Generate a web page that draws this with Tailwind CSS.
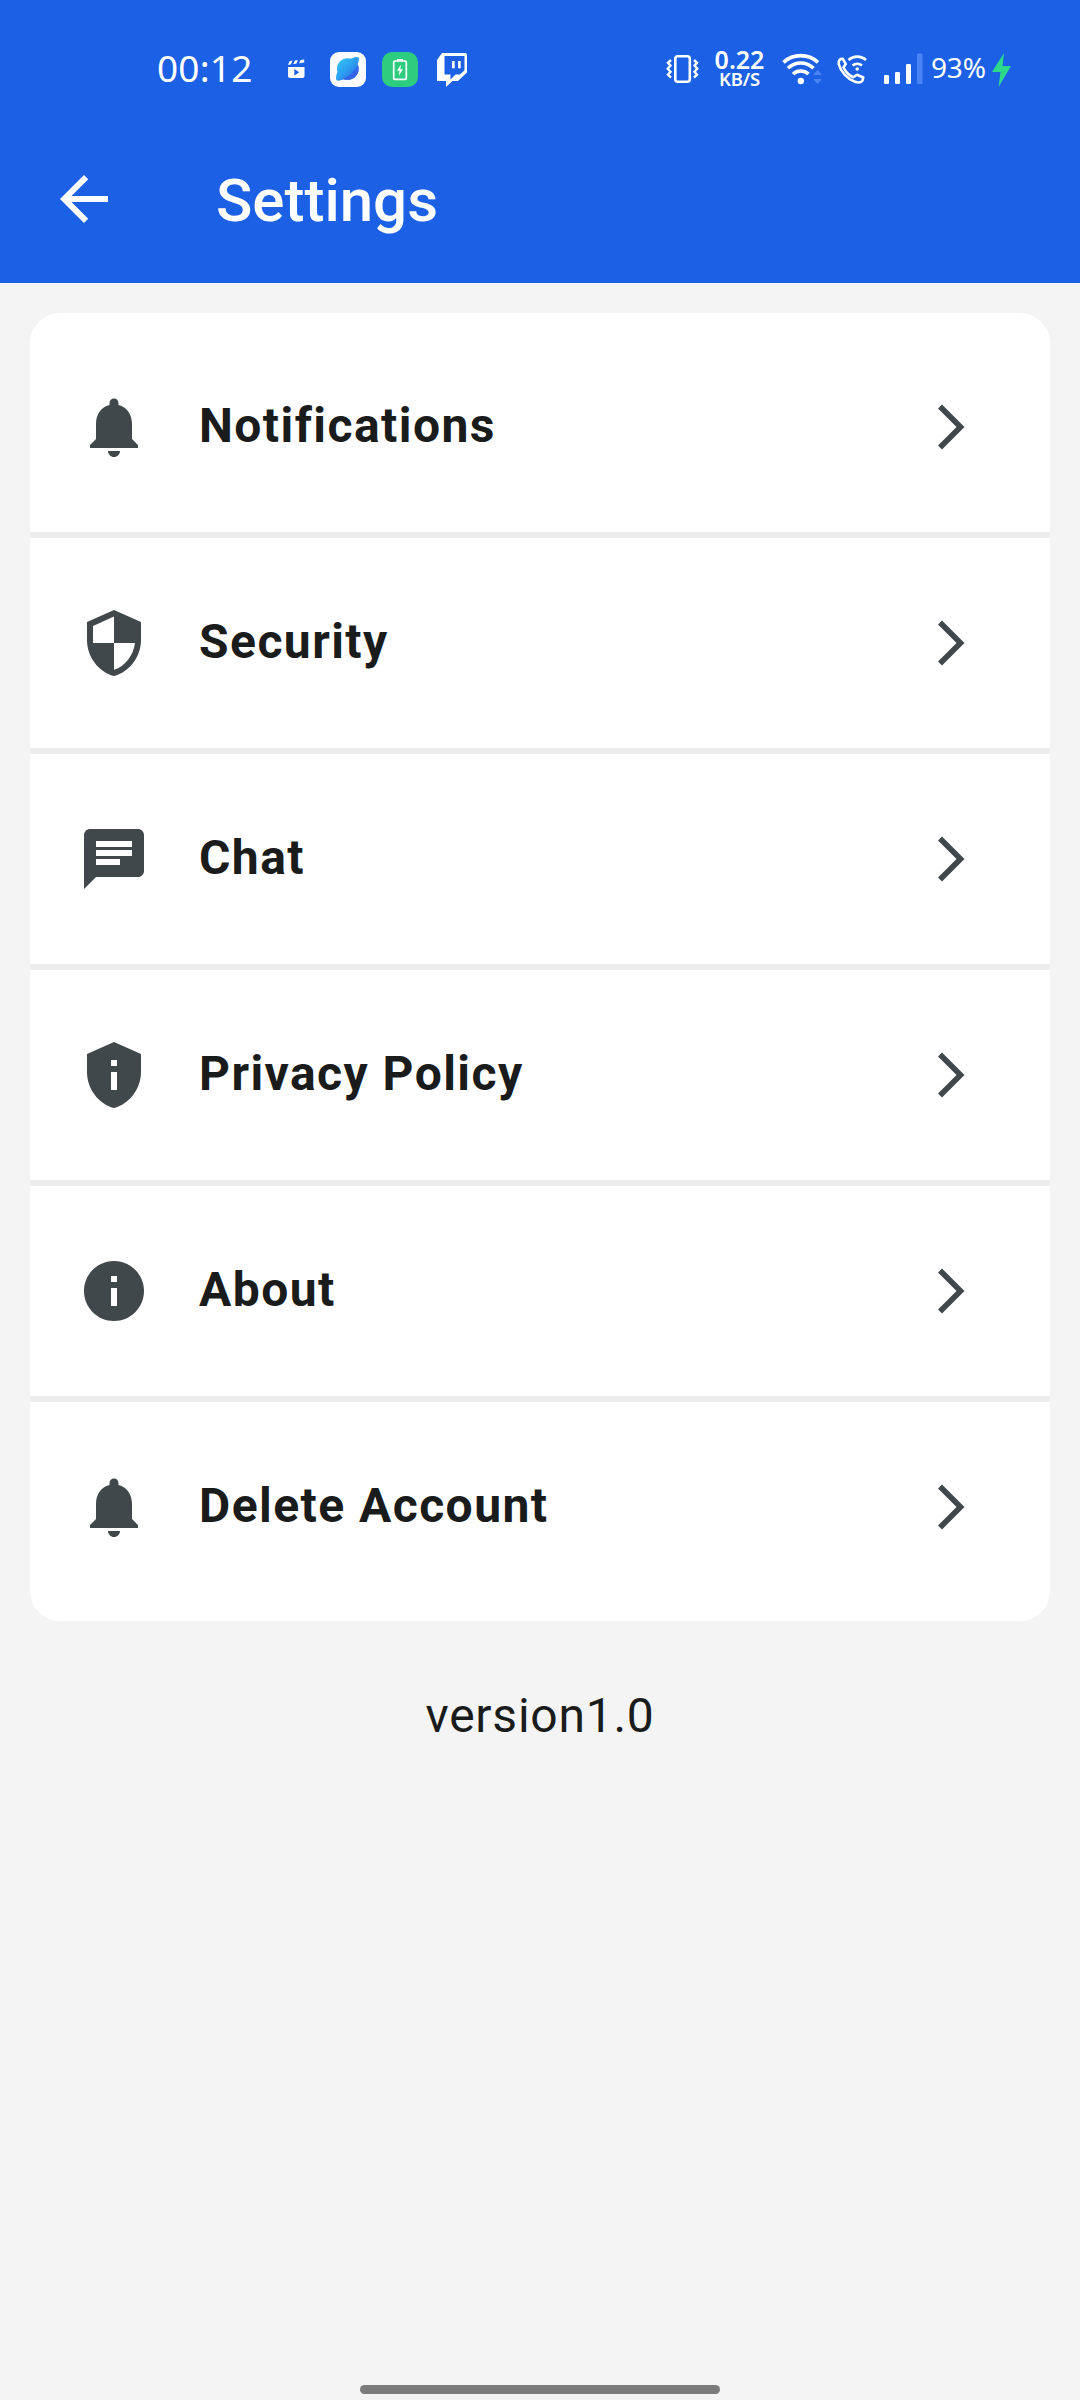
<!DOCTYPE html>
<html lang="en">
<head>
<meta charset="utf-8">
<title>Settings</title>
<script src="https://cdn.jsdelivr.net/npm/@tailwindcss/browser@4"></script>
</head>
<body class="w-[1080px] h-[2400px] overflow-hidden bg-[#f4f4f4] text-[#1a1c1c] font-[Roboto,sans-serif] flex flex-col">
<svg class="hidden">
  <symbol id="bell" viewBox="0 0 24 24"><path d="M12 22c1.1 0 2-.9 2-2h-4c0 1.1.89 2 2 2zm6-6v-5c0-3.07-1.64-5.64-4.5-6.32V4c0-.83-.67-1.5-1.5-1.5s-1.5.67-1.5 1.5v.68C7.63 5.36 6 7.92 6 11v5l-2 2v1h16v-1l-2-2z"/></symbol>
  <symbol id="shield" viewBox="0 0 24 24"><path d="M12 1L3 5v6c0 5.55 3.84 10.74 9 12 5.16-1.26 9-6.45 9-12V5l-9-4zm0 10.99h7c-.53 4.12-3.28 7.79-7 8.94V12H5V6.3l7-3.11v8.8z"/></symbol>
  <symbol id="chat" viewBox="0 0 24 24"><path d="M20 2H4c-1.1 0-1.99.9-1.99 2L2 22l4-4h14c1.1 0 2-.9 2-2V4c0-1.1-.9-2-2-2zM6 9h12v2H6V9zm8 5H6v-2h8v2zm4-6H6V6h12v2z"/></symbol>
  <symbol id="privacy" viewBox="0 0 24 24"><path d="M12 1L3 5v6c0 5.55 3.84 10.74 9 12 5.16-1.26 9-6.45 9-12V5l-9-4zm-1 6h2v2h-2V7zm0 4h2v6h-2v-6z"/></symbol>
  <symbol id="info" viewBox="0 0 24 24"><path d="M12 2C6.48 2 2 6.48 2 12s4.48 10 10 10 10-4.48 10-10S17.52 2 12 2zm1 15h-2v-6h2v6zm0-8h-2V7h2v2z"/></symbol>
  <symbol id="next" viewBox="0 0 24 24"><path d="M6.23 20.23L8 22l10-10L8 2 6.23 3.77 14.46 12z"/></symbol>
</svg>

<header class="h-[283px] shrink-0 bg-[#1c60e6] text-white pt-[50px]">
  <div class="h-10 flex items-center justify-between pl-[156px] pr-[66px] whitespace-nowrap">
    <div class="flex items-center">
      <div class="w-[130px] h-10 text-[37px] leading-[35px] pl-px font-['Noto_Sans',sans-serif] tracking-[0.2px]">00:12</div>
      <svg class="w-5 h-10" viewBox="286 50 20 40" fill="#fff"><path d="M288 67h16.500v9a2 2 0 0 1-2 2h-12.500a2 2 0 0 1-2-2z"/><path d="M288 65l1.500-3.800 3-.7-1.500 3.800zM293.300 64l1.600-3.400 3-.5-1.600 3.600zM299 63.300l1.600-3.200 3.600-.5v3z"/><path d="M294.300 69v6.400l5-3.200z" fill="#1c60e6"/></svg>
      <svg class="w-9 h-10 ml-6" viewBox="330 50 36 40"><defs><linearGradient id="g" x1="0" y1="0" x2="1" y2="1"><stop offset="0" stop-color="#35c8f5"/><stop offset=".5" stop-color="#2b9df0"/><stop offset="1" stop-color="#3157e0"/></linearGradient></defs><rect x="330" y="52" width="36" height="35" rx="9" fill="#fafaff"/><circle cx="347.800" cy="69" r="10.800" fill="url(#g)"/><path d="M337.500 72c-1.500 3.500-2 7-.7 8.300 1.200 1 4 .3 7-1zM351 58.500c3.500-1.500 6.500-2 7.500-1 1 1.200.2 4.500-1.300 7.500z" fill="url(#g)"/><path d="M358 65c-3 6-9 12-15.500 14 4.500 1.800 9.500.6 12.800-2.600 3.300-3.400 4.200-7.400 2.700-11.400z" fill="#3465e6"/></svg>
      <svg class="w-9 h-10 ml-4" viewBox="382 50 36 40"><rect x="382" y="52" width="36" height="35" rx="10" fill="#2dcc7f"/><rect x="393.700" y="61" width="12.600" height="18.300" rx="1" fill="none" stroke="#fff" stroke-width="1.700"/><path d="M397 59h6v2h-6z" fill="#fff"/><path d="M401 64.500l-4 6.200h2.500l-.6 5 4-6.500h-2.600z" fill="#fff"/></svg>
      <svg class="w-8 h-10 ml-[18px]" viewBox="436 50 32 40" fill="#fff"><path fill-rule="evenodd" d="M442 53h23q2 0 2 2v17.500l-9 8.500h-5.500l-6.500 6v-6h-9V60zM444.500 56v18.500h6v5l5-5h4.500l4.500-4.300V56z"/><path d="M452 61h2.700v7.300H452zM458 61h2.700v7.300H458z"/></svg>
    </div>
    <div class="flex items-center">
      <svg class="w-[34px] h-10" viewBox="665 50 34 40" fill="none" stroke="#fff" stroke-width="2.600"><rect x="675.300" y="56.300" width="14.500" height="25.500" rx="2.500"/><path stroke-width="2.400" d="M671 60l-3 2.800 2.500 2.800-2.800 3.200 2.800 3-2.500 2.800 3 3M694 60l3 2.800-2.500 2.800 2.800 3.200-2.800 3 2.500 2.800-3 3"/></svg>
      <div class="ml-[13px] w-[55px] h-10 flex flex-col items-center font-['Noto_Sans',sans-serif] font-semibold">
        <div class="text-[25px] leading-[19px]">0.22</div>
        <div class="text-[18.5px] leading-[20px] tracking-[-0.2px]">KB/S</div>
      </div>
      <svg class="w-[42px] h-10 ml-[14px]" viewBox="781 50 42 40" fill="none" stroke="#fff" stroke-width="3.600"><path d="M783.500 62.300a25.500 25.500 0 0 1 34.500 0M788 68.300a18 18 0 0 1 25.500 0M793 74a11.500 11.500 0 0 1 15.500 0"/><circle cx="800.800" cy="81" r="3.200" fill="#fff" stroke="none"/><path d="M814 74.500l3.500-4 3.500 4zM814 79.500l3.500 4 3.500-4z" fill="#4a83f2" stroke="#4a83f2" stroke-width="1"/></svg>
      <svg class="w-8 h-10 ml-[13px]" viewBox="836 50 32 40" fill="none" stroke="#fff" stroke-width="2.600"><path stroke-linejoin="round" d="M838.800 61.500c.5-1.700 2.200-3 4-2.700l3 5.300-2.300 3.200c2 4.500 5.300 8 9.800 10l3.700-2.600 6.300 2.800-1 3.500c-1.600 1.800-4.500 1.800-7.300.8-7.700-2.800-14.500-10.500-16.200-17.500z"/><path d="M848.500 60a13 13 0 0 1 17.500 0M852.500 65.500a7.500 7.500 0 0 1 9.500 0"/><circle cx="857.200" cy="69" r="1.800" fill="#fff" stroke="none"/></svg>
      <svg class="w-10 h-10 ml-[15px]" viewBox="883 50 40 40" fill="#fff"><rect x="884" y="75" width="5" height="9" rx="1.300"/><rect x="895" y="72" width="5" height="12" rx="1.300"/><rect x="906" y="64" width="5" height="20" rx="1.300"/><rect x="917" y="53.500" width="5.500" height="30.500" rx="1.300" fill="#4a83f2"/></svg>
      <div class="ml-2 w-[59px] text-[28px] leading-[35px] h-10 font-['Noto_Sans',sans-serif] tracking-[-0.2px]">93%</div>
      <svg class="w-6 h-10" viewBox="990 50 24 40"><path d="M1004 53l-12 19h8.500l-2 15L1011 66h-8.500z" fill="#2fd98a"/></svg>
    </div>
  </div>
  <div class="h-[168px] mt-[25px] flex items-center pl-12">
    <svg class="size-[72px]" viewBox="0 0 24 24" fill="#fff"><path d="M20 11H7.830l5.590-5.590L12 4l-8 8 8 8 1.410-1.410L7.830 13H20v-2z"/></svg>
    <h1 class="ml-24 pt-[3px] text-[60px] leading-[72px] font-medium">Settings</h1>
  </div>
</header>

<main class="px-[30px] pt-[30px]">
  <ul class="bg-white rounded-[30px] py-[9px] divide-y-[6px] divide-[#ededed] text-[48px] font-bold tracking-[1.45px]">
    <li class="h-[216px] flex items-center pl-12 pr-[72px]"><svg class="size-[72px] fill-[#40484b]"><use href="#bell"/></svg><span class="ml-[49px] pb-[2px] flex-1">Notifications</span><svg class="size-[54px] fill-[#40484b]"><use href="#next"/></svg></li>
    <li class="h-[216px] flex items-center pl-12 pr-[72px]"><svg class="size-[72px] fill-[#40484b]"><use href="#shield"/></svg><span class="ml-[49px] pb-[2px] flex-1">Security</span><svg class="size-[54px] fill-[#40484b]"><use href="#next"/></svg></li>
    <li class="h-[216px] flex items-center pl-12 pr-[72px]"><svg class="size-[72px] fill-[#40484b]"><use href="#chat"/></svg><span class="ml-[49px] pb-[2px] flex-1">Chat</span><svg class="size-[54px] fill-[#40484b]"><use href="#next"/></svg></li>
    <li class="h-[216px] flex items-center pl-12 pr-[72px]"><svg class="size-[72px] fill-[#40484b]"><use href="#privacy"/></svg><span class="ml-[49px] pb-[2px] flex-1">Privacy Policy</span><svg class="size-[54px] fill-[#40484b]"><use href="#next"/></svg></li>
    <li class="h-[216px] flex items-center pl-12 pr-[72px]"><svg class="size-[72px] fill-[#40484b]"><use href="#info"/></svg><span class="ml-[49px] pb-[2px] flex-1">About</span><svg class="size-[54px] fill-[#40484b]"><use href="#next"/></svg></li>
    <li class="h-[210px] flex items-center pl-12 pr-[72px]"><svg class="size-[72px] fill-[#40484b]"><use href="#bell"/></svg><span class="ml-[49px] pb-[2px] flex-1">Delete Account</span><svg class="size-[54px] fill-[#40484b]"><use href="#next"/></svg></li>
  </ul>
  <p class="mt-[59px] text-center text-[48px] leading-[72px] tracking-[0.75px]">version1.0</p>
</main>

<div class="mt-auto mb-[6px] mx-auto w-[360px] h-[9px] rounded-full bg-[#7b7b7b]"></div>
</body>
</html>
